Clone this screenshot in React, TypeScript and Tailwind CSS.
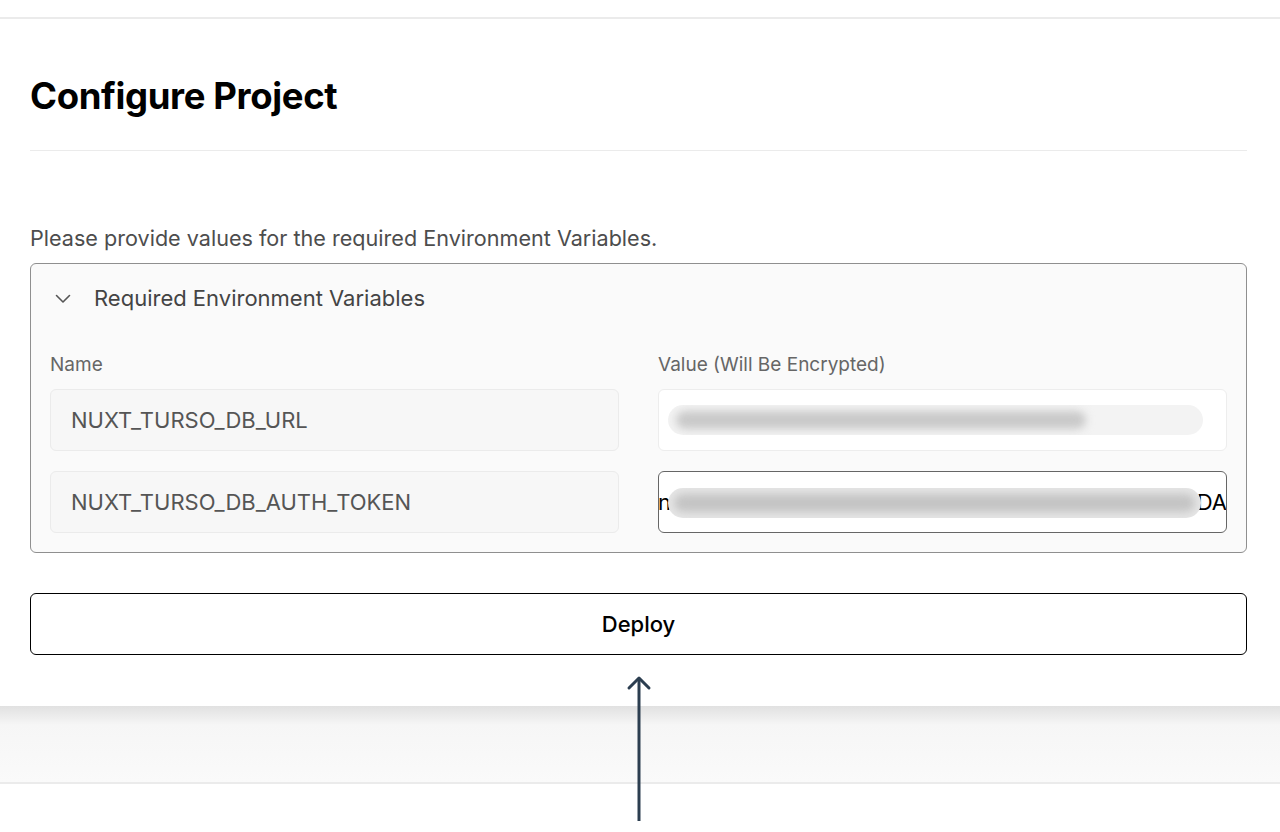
export default function App() {
  return (
    <div className="relative min-h-[832px] bg-white font-['Inter','Liberation_Sans',sans-serif] text-black">
      <div className="h-[19px] border-b-2 border-[#ebebeb]" />

      <main className="pl-[30px] pr-[33px]">
        <h1 className="mt-[55px] text-[36.5px] font-bold leading-[44px] tracking-[-0.01em]">Configure Project</h1>
        <div className="mt-[32px] border-t border-[#ebebeb]" />

        <p className="mt-[71px] text-[21.6px] leading-[32px] text-[#4d4d4d]">
          Please provide values for the required Environment Variables.
        </p>

        <section className="mt-[9px] rounded-[6px] border border-[#8f8f8f] bg-[#fafafa] px-[19px] pb-[19px]">
          <div className="flex h-[69px] items-center gap-[23px] pl-[5px]">
            <svg width="16" height="10" viewBox="0 0 16 10" fill="none" stroke="#555" strokeWidth="1.6" strokeLinecap="round" strokeLinejoin="round">
              <polyline points="1.5,1.5 8,8 14.5,1.5" />
            </svg>
            <span className="text-[22px] text-[#444]">Required Environment Variables</span>
          </div>

          <div className="mt-[18px] grid grid-cols-2 gap-x-[39px]">
            <div className="text-[19px] leading-[28px] text-[#666]">Name</div>
            <div className="text-[19px] leading-[28px] text-[#666]">Value (Will Be Encrypted)</div>
          </div>

          <div className="mt-[10px] grid grid-cols-2 gap-x-[39px] gap-y-[20px]">
            <div className="flex h-[62px] items-center rounded-[6px] border border-[#ebebeb] bg-[#f7f7f7] px-[20px] text-[22px] text-[#555]">
              NUXT_TURSO_DB_URL
            </div>
            <div className="relative h-[62px] rounded-[6px] border border-[#ededed] bg-white">
              <div className="absolute left-[9px] right-[23px] top-[15px] h-[30px] overflow-hidden rounded-full bg-[#f3f3f3]">
                <div className="absolute left-[8px] top-[6px] h-[18px] w-[410px] rounded-full bg-[#c9c9c9] blur-[4px]" />
              </div>
            </div>

            <div className="flex h-[62px] items-center rounded-[6px] border border-[#ebebeb] bg-[#f7f7f7] px-[20px] text-[22px] text-[#555]">
              NUXT_TURSO_DB_AUTH_TOKEN
            </div>
            <div className="relative flex h-[62px] items-center justify-between overflow-hidden rounded-[6px] border border-[#666] bg-white text-[22px] text-black">
              <span className="-ml-[1px]">n</span>
              <span className="-mr-[1px]">DA</span>
              <div className="absolute left-[9px] right-[25px] top-[16px] h-[30px] overflow-hidden rounded-full bg-[#e6e6e6]">
                <div className="absolute inset-x-[6px] top-[6px] h-[18px] rounded-full bg-[#c4c4c4] blur-[4px]" />
              </div>
            </div>
          </div>
        </section>

        <button className="mt-[40px] flex h-[62px] w-full items-center justify-center rounded-[6px] border-[1.5px] border-black bg-white text-[22px] font-medium">
          Deploy
        </button>
      </main>

      <div className="mt-[51px] h-[78px] border-b-2 border-[#ebebeb] bg-linear-to-b from-[#e1e1e1] from-0% via-[#f6f6f6] via-25% to-[#fafafa]" />

      <svg className="absolute left-[626px] top-[675px]" width="26" height="146" viewBox="0 0 26 146" fill="none" stroke="#2c3e50" strokeWidth="3" strokeLinecap="round" strokeLinejoin="round">
        <line x1="13" y1="3" x2="13" y2="146" strokeLinecap="butt" />
        <polyline points="3,13 13,3 23,13" />
      </svg>
    </div>
  )
}
